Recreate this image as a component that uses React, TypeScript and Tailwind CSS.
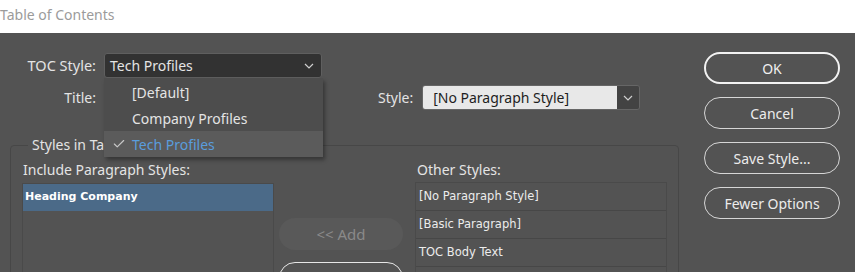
import { Check } from 'lucide-react';

const ui = "font-['Noto_Sans',sans-serif]";
const list = "font-['DejaVu_Sans',sans-serif]";

function Chevron({ className }: { className?: string }) {
  return (
    <svg width="10" height="6" viewBox="0 0 10 6" className={className} fill="none">
      <polyline points="1,1 5,5 9,1" stroke="currentColor" strokeWidth="1.2" />
    </svg>
  );
}

const otherStyles = ['[No Paragraph Style]', '[Basic Paragraph]', 'TOC Body Text', ''];

export default function App() {
  return (
    <div className={`h-[272px] w-[855px] overflow-hidden bg-[#535353] ${ui} text-[14px] text-[#e4e4e4]`}>
      {/* window title */}
      <div className="h-[33px] bg-white flex items-center text-[#9b9b9b] text-[14px] leading-none pb-[3px]">
        Table of Contents
      </div>

      <div className="relative flex">
        <div className="w-[680px] pt-[20px]">
          {/* TOC Style row */}
          <div className="flex items-center h-[25px]">
            <span className="w-[96px] text-right text-[14.5px]">TOC Style:</span>
            <div className="ml-2 w-[218px] h-[25px] bg-[#323232] border border-[#5f5f5f] rounded-[3px] flex items-center justify-between pl-[5px] pr-[7px]">
              <span>Tech Profiles</span>
              <Chevron className="text-[#d0d0d0]" />
            </div>
          </div>

          {/* Title row */}
          <div className="flex items-center h-[25px] mt-[7px]">
            <span className="w-[96px] text-right">Title:</span>
            <div className="ml-2 w-[218px] h-[25px] bg-[#e6e6e6] rounded-[2px]" />
            <span className="ml-[56px]">Style:</span>
            <div className="ml-[9px] w-[218px] h-[25px] flex border border-[#666666] rounded-[3px] overflow-hidden">
              <div className="flex-1 bg-[#e8e8e8] text-[#1e1e1e] flex items-center pl-[10px]">[No Paragraph Style]</div>
              <div className="w-[22px] bg-[#434343] flex items-center justify-center">
                <Chevron className="text-[#cfcfcf]" />
              </div>
            </div>
          </div>

          {/* group box */}
          <fieldset className="ml-[10px] mt-[26px] w-[668px] h-[200px] border border-[#474747] rounded-[4px] px-[11px]">
            <legend className="ml-[6px] px-[4px] leading-[18px]">Styles in Table of Contents</legend>
            <div className="flex pt-[7px]">
              <div className="w-[252px]">
                <div className="leading-[18px] ml-px">Include Paragraph Styles:</div>
                <div className={`mt-[4px] h-[120px] border border-[#4a4a4a] ${list} text-[11.5px]`}>
                  <div className="h-[27px] bg-[#4b6a88] flex items-center pl-[2px] font-bold text-[11px] text-white">Heading Company</div>
                </div>
              </div>

              <div className="ml-[5px] w-[124px] pt-[57px] flex flex-col gap-[12px]">
                <div className="h-[32px] rounded-full bg-[#595959] flex items-center justify-center text-[15px] text-[#8a8a8a]">&lt;&lt; Add</div>
                <div className="h-[32px] rounded-full border-[1.5px] border-[#e6e6e6]" />
              </div>

              <div className="ml-[12px] w-[252px]">
                <div className="leading-[18px] ml-[2px]">Other Styles:</div>
                <div className={`mt-[3px] border border-[#4a4a4a] ${list} text-[11.5px] text-[#ececec]`}>
                  {otherStyles.map((s, i) => (
                    <div key={i} className="h-[28px] flex items-center pl-[3px] pt-px border-b border-[#474747]">{s}</div>
                  ))}
                </div>
              </div>
            </div>
          </fieldset>
        </div>

        {/* buttons */}
        <div className="ml-[24px] w-[136px] pt-[19px] flex flex-col gap-[13px]">
          <button className="h-[32px] rounded-full border-2 border-[#f2f2f2] text-[#f0f0f0]">OK</button>
          <button className="h-[32px] rounded-full border border-[#d6d6d6] text-[#ececec]">Cancel</button>
          <button className="h-[32px] rounded-full border border-[#d6d6d6] text-[#ececec]">Save Style...</button>
          <button className="h-[32px] rounded-full border border-[#d6d6d6] text-[#ececec]">Fewer Options</button>
        </div>

        {/* open TOC Style menu */}
        <div className="absolute left-[104px] top-[45px] w-[219px] bg-[#4d4d4d] pt-px shadow-[2px_3px_4px_rgba(0,0,0,0.35)]">
          <div className="h-[26px] flex items-center pl-[28px]">[Default]</div>
          <div className="h-[26px] flex items-center pl-[28px]">Company Profiles</div>
          <div className="h-[26px] flex items-center bg-[#5b5b5b] text-[#5a9ddd]">
            <Check size={14} strokeWidth={2} className="ml-[8px] mr-[6px] text-[#c8c8c8]" />
            Tech Profiles
          </div>
        </div>
      </div>
    </div>
  );
}
